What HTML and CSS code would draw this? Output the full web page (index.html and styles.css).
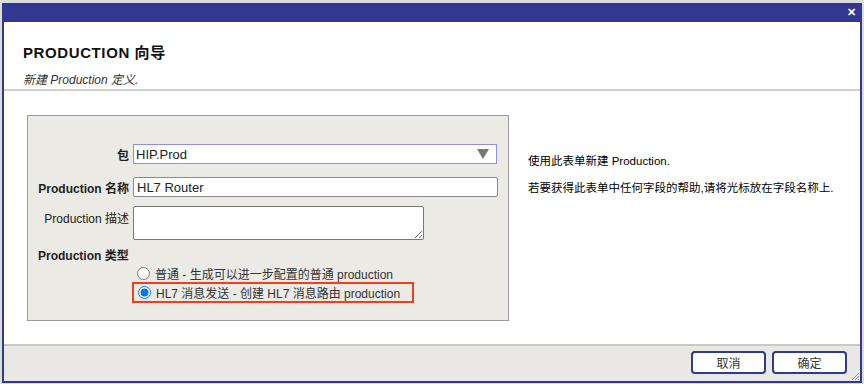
FILE: index.html
```html
<!DOCTYPE html>
<html lang="zh">
<head>
	<meta charset="UTF-8">
	<title>Production 向导</title>
	<link rel="stylesheet" href="styles.css">
</head>
<body>
	<div class="dialog">
		<div class="titlebar">
			<span class="close">&#x2715;</span>
		</div>
		<div class="header">
			<h1>PRODUCTION 向导</h1>
			<p>新建 Production 定义.</p>
		</div>
		<div class="content">
			<div class="formbox">
				<div class="row">
					<label class="bold">包</label>
					<div class="select">
						<span>HIP.Prod</span>
						<svg width="12" height="10" viewBox="0 0 12 10"><path d="M0 0 L12 0 L6 10 Z" fill="#777"/></svg>
					</div>
				</div>
				<div class="row second">
					<label class="bold">Production 名称</label>
					<input type="text" class="name" value="HL7 Router">
				</div>
				<div class="row top">
					<label>Production 描述</label>
					<textarea class="desc"></textarea>
				</div>
				<div class="typelabel">Production 类型</div>
				<div class="radios">
					<label class="radio"><input type="radio" name="t"> 普通 - 生成可以进一步配置的普通 production</label>
					<label class="radio picked"><input type="radio" name="t" checked> HL7 消息发送 - 创建 HL7 消息路由 production</label>
				</div>
			</div>
			<div class="help">
				<p>使用此表单新建 Production.</p>
				<p>若要获得此表单中任何字段的帮助,请将光标放在字段名称上.</p>
			</div>
		</div>
		<div class="footer">
			<button>取消</button>
			<button>确定</button>
			<svg class="grip" width="9" height="9" viewBox="0 0 9 9">
				<path d="M8 1 L1 8 M8 4 L4 8 M8 7 L7 8" stroke="#999" stroke-width="1"/>
			</svg>
		</div>
	</div>
</body>
</html>
```

FILE: styles.css
```css
*{
  padding: 0;
  margin: 0;
  box-sizing: border-box;
}

body{
  background: #dcdcdc;
  font-family: "Liberation Sans", "Noto Sans CJK SC", sans-serif;
  font-size: 12px;
  color: #222;
}

.dialog{
  margin: 3px 2px 0 2px;
  height: 380px;
  border: 2px solid #32388f;
  border-top: none;
  display: flex;
  flex-direction: column;
  background: #fff;
}

.titlebar{
  height: 19px;
  background: #32388f;
  margin: 0 -2px;
  display: flex;
  justify-content: flex-end;
  align-items: center;
  padding-right: 6px;
}

.close{
  color: #fff;
  font-size: 11px;
  font-weight: bold;
}

.header{
  height: 69px;
  border-bottom: 2px solid #cfcfcf;
  padding: 21px 0 0 19px;
}

.header h1{
  font-size: 15px;
  font-weight: bold;
  letter-spacing: 0.6px;
  color: #111;
  line-height: 20px;
}

.header p{
  font-style: italic;
  color: #333;
  margin-top: 10px;
  line-height: 14px;
}

.content{
  flex: 1;
  display: flex;
  padding: 24px 0 0 23px;
}

.formbox{
  width: 482px;
  height: 206px;
  background: #ebeae5;
  border: 1px solid #9a9a9a;
  padding-top: 28px;
}

.row{
  display: flex;
  align-items: center;
  margin-bottom: 13px;
}

.row.second{
  margin-bottom: 9px;
}

.row.top{
  align-items: flex-start;
  margin-bottom: 9px;
}

.row label{
  width: 105px;
  text-align: right;
  padding-right: 4px;
  color: #222;
}

.row.top label{
  padding-top: 3px;
}

.bold{
  font-weight: bold;
}

.select{
  width: 364px;
  height: 20px;
  background: #fff;
  border: 1px solid #8f8fdc;
  display: flex;
  align-items: center;
  justify-content: space-between;
  padding: 0 7px 0 2px;
  font-size: 13px;
}

.name{
  width: 365px;
  height: 20px;
  border: 1px solid #8a8a8a;
  border-radius: 2px;
  padding: 0 3px;
  font-family: inherit;
  font-size: 13px;
  color: #222;
}

.desc{
  width: 291px;
  height: 34px;
  border: 1px solid #777;
  border-radius: 2px;
  font-family: inherit;
}

.typelabel{
  font-weight: bold;
  padding-left: 10px;
  line-height: 15px;
}

.radios{
  padding: 0 0 0 104px;
  display: flex;
  flex-direction: column;
}

.radio{
  display: flex;
  align-items: center;
  gap: 5px;
  height: 18px;
  padding-left: 5px;
  color: #333;
}

.radio input{
  width: 13px;
  height: 13px;
  margin: 0;
  accent-color: #0a75f0;
}

.radio.picked{
  width: 282px;
  height: 21px;
  border: 2px solid #ee3f1f;
  padding-left: 4px;
}

.help{
  padding: 39px 0 0 19px;
  color: #000;
  font-size: 11.5px;
}

.help p{
  line-height: 15px;
  margin-bottom: 12px;
}

.footer{
  height: 37px;
  border-top: 2px solid #c8c8c8;
  background: #e9e8e4;
  display: flex;
  justify-content: flex-end;
  align-items: flex-start;
  gap: 6px;
  padding: 5px 13px 0 0;
  position: relative;
}

.footer button{
  width: 75px;
  height: 23px;
  background: #fff;
  border: 2px solid #2e3a8c;
  border-radius: 4px;
  font-family: inherit;
  font-size: 12px;
  color: #333;
  cursor: pointer;
}

.grip{
  position: absolute;
  right: 0;
  bottom: 0;
}
```
